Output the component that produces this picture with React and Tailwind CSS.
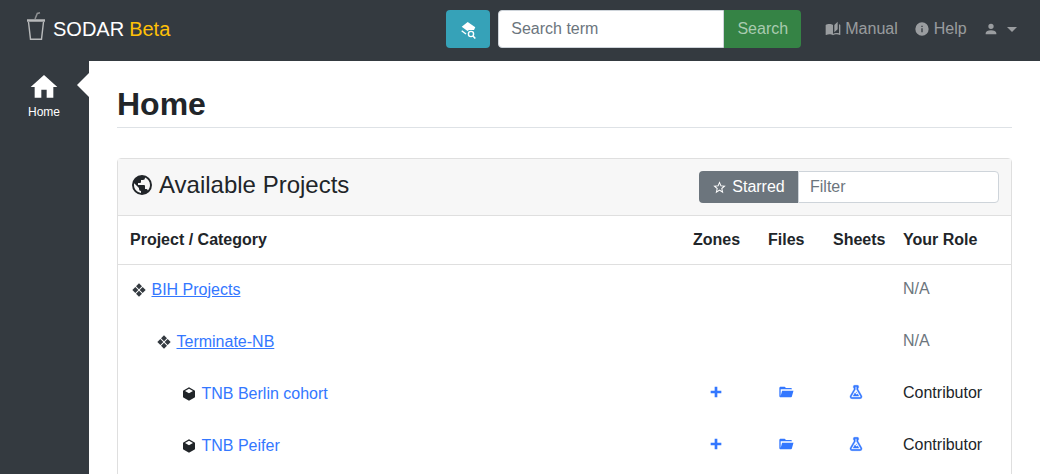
import React from "react";

const mdi = {
  home: "M10 20v-6h4v6h5v-8h3L12 3 2 12h3v8z",
  earth:
    "M17.9,17.39C17.64,16.59 16.89,16 16,16H15V13A1,1 0 0,0 14,12H8V10H10A1,1 0 0,0 11,9V7H13A2,2 0 0,0 15,5V4.59C17.93,5.77 20,8.64 20,12C20,14.08 19.2,15.97 17.9,17.39M11,19.93C7.05,19.44 4,16.08 4,12C4,11.38 4.08,10.78 4.21,10.21L9,15V16A2,2 0 0,0 11,18M12,2A10,10 0 0,0 2,12A10,10 0 0,0 12,22A10,10 0 0,0 22,12A10,10 0 0,0 12,2Z",
  info: "M13,9H11V7H13M13,17H11V11H13M12,2A10,10 0 0,0 2,12A10,10 0 0,0 12,22A10,10 0 0,0 22,12A10,10 0 0,0 12,2Z",
  account:
    "M12,4A4,4 0 0,1 16,8A4,4 0 0,1 12,12A4,4 0 0,1 8,8A4,4 0 0,1 12,4M12,14C16.42,14 20,15.79 20,18V20H4V18C4,15.79 7.58,14 12,14Z",
  plus: "M20 14H14V20H10V14H4V10H10V4H14V10H20V14Z",
  folder:
    "M19,20H4C2.89,20 2,19.1 2,18V6C2,4.89 2.89,4 4,4H10L12,6H19A2,2 0 0,1 21,8H21L4,8V18L6.14,10H23.21L20.93,18.5C20.7,19.37 19.92,20 19,20Z",
  flask:
    "M5,19A1,1 0 0,0 6,20H18A1,1 0 0,0 19,19C19,18.79 18.93,18.59 18.82,18.43L13,8.35V4H11V8.35L5.18,18.43C5.07,18.59 5,18.79 5,19M6,22A3,3 0 0,1 3,19C3,18.4 3.18,17.84 3.5,17.37L9,7.81V6A1,1 0 0,1 8,5V4A2,2 0 0,1 10,2H14A2,2 0 0,1 16,4V5A1,1 0 0,1 15,6V7.81L20.5,17.37C20.82,17.84 21,18.4 21,19A3,3 0 0,1 18,22H6M13,16L14.34,14.66L16.27,18H7.73L10.39,13.39L13,16M12.5,12A0.5,0.5 0 0,1 13,12.5A0.5,0.5 0 0,1 12.5,13A0.5,0.5 0 0,1 12,12.5A0.5,0.5 0 0,1 12.5,12Z",
  star: "M12,15.39L8.24,17.66L9.23,13.38L5.91,10.5L10.29,10.13L12,6.09L13.71,10.13L18.09,10.5L14.77,13.38L15.76,17.66M22,9.24L14.81,8.63L12,2L9.19,8.62L2,9.24L7.45,13.97L5.82,21L12,17.27L18.18,21L16.54,13.97L22,9.24Z",
  cube: "M21,16.5C21,16.88 20.79,17.21 20.47,17.38L12.57,21.82C12.41,21.94 12.21,22 12,22C11.79,22 11.59,21.94 11.43,21.82L3.53,17.38C3.21,17.21 3,16.88 3,16.5V7.5C3,7.12 3.21,6.79 3.53,6.62L11.43,2.18C11.59,2.06 11.79,2 12,2C12.21,2 12.41,2.06 12.57,2.18L20.47,6.62C20.79,6.79 21,7.12 21,7.5V16.5M12,4.15L6.04,7.5L12,10.85L17.96,7.5L12,4.15Z",
  rhombus:
    "M12 2L7.5 6.5L12 11L16.5 6.5ZM6.5 7.5L2 12L6.5 16.5L11 12ZM17.5 7.5L13 12L17.5 16.5L22 12ZM12 13L7.5 17.5L12 22L16.5 17.5Z",
  book: "M19 1L14 6V17L19 12.5V1M21 5V18.5C19.9 18.15 18.7 18 17.5 18C15.8 18 13.35 18.65 12 19.5V6C10.55 4.9 8.45 4.5 6.5 4.5C4.55 4.5 2.45 4.9 1 6V20.65C1 20.9 1.25 21.15 1.5 21.15C1.6 21.15 1.65 21.1 1.75 21.1C3.1 20.45 5.05 20 6.5 20C8.45 20 10.55 20.4 12 21.5C13.35 20.65 15.8 20 17.5 20C19.15 20 20.85 20.3 22.25 21.05C22.35 21.1 22.4 21.1 22.5 21.1C22.75 21.1 23 20.85 23 20.6V6C22.4 5.55 21.75 5.25 21 5Z",
};

function Icon({ d, className }) {
  return (
    <svg viewBox="0 0 24 24" fill="currentColor" className={className}>
      <path d={d} />
    </svg>
  );
}

const projects = [
  { name: "BIH Projects", indent: "pl-[13px]", category: true },
  { name: "Terminate-NB", indent: "pl-[38px]", category: true },
  { name: "TNB Berlin cohort", indent: "pl-[63px]" },
  { name: "TNB Peifer", indent: "pl-[63px]" },
];

function ProjectRow({ name, indent, category }) {
  return (
    <div className="flex h-[52px] items-center pb-[2px]">
      <div className={`flex flex-1 items-center ${indent}`}>
        <Icon
          d={category ? mdi.rhombus : mdi.cube}
          className={`h-4 w-4 shrink-0 ${category ? "text-[#343a40]" : "text-[#212529]"}`}
        />
        <a
          href="#"
          className={`ml-[4.5px] text-[#3377ff] ${category ? "underline" : ""}`}
        >
          {name}
        </a>
      </div>
      {category ? (
        <div className="w-[108px] pb-[2px] text-[#6c757d]">N/A</div>
      ) : (
        <>
          <div className="flex w-[225px] items-center pb-[4px] text-[#3377ff]">
            <Icon d={mdi.plus} className="ml-[30px] h-4 w-4" />
            <Icon d={mdi.folder} className="ml-[54px] h-4 w-4" />
            <Icon d={mdi.flask} className="ml-[54px] h-4 w-4 stroke-current stroke-[0.6]" />
          </div>
          <div className="w-[108px] pb-[2px] text-[#212529]">Contributor</div>
        </>
      )}
    </div>
  );
}

export default function App() {
  return (
    <div className="flex h-[474px] w-[1040px] flex-col overflow-hidden bg-[#343a40] font-['Liberation_Sans',Arial,sans-serif] text-base text-[#212529]">
      {/* Navbar */}
      <header className="flex h-[61px] shrink-0 items-center pb-[3px] pl-[26px]">
        <svg viewBox="0 0 20 28" fill="none" className="mb-[6px] h-[28px] w-[20px]">
          <path d="M9 7L11.3 1.5L14 .8" stroke="#8f9193" strokeWidth="1.5" />
          <path d="M1 8.5H19" stroke="#b8babb" strokeWidth="2.5" />
          <path d="M2.5 10L4.5 27.2H15.5L17.5 10" stroke="#b8babb" strokeWidth="1.4" />
        </svg>
        <span className="ml-[7px] text-[20px] text-white">SODAR</span>
        <span className="ml-[5px] text-[20px] text-[#ffc107]">Beta</span>
        <button className="ml-[276px] flex h-[38px] w-[44px] items-center justify-center rounded bg-[#36a2b8] text-white">
          <svg viewBox="0 0 16 17" className="mt-[2px] h-[17px] w-4" fill="none" stroke="currentColor">
            <path d="M7.7 0L1.7 4.7L7.5 9L9 8H14L15.3 5.3Z" fill="currentColor" stroke="none" />
            <path d="M1.7 8.7L6 12" strokeWidth="1.4" />
            <circle cx="11" cy="12" r="2.6" strokeWidth="1.4" />
            <path d="M13 14L15.3 16.5" strokeWidth="1.6" />
          </svg>
        </button>
        <div className="ml-[8px] flex h-[38px]">
          <div className="flex w-[226px] items-center rounded-l border border-[#ced4da] bg-white px-3 text-[#6c757d]">
            Search term
          </div>
          <button className="w-[77px] rounded-r bg-[#358345] text-[#a9cbb0]">Search</button>
        </div>
        <div className="ml-[24px] flex items-center text-[rgba(255,255,255,0.5)]">
          <Icon d={mdi.book} className="h-4 w-4" />
          <span className="ml-[4px]">Manual</span>
          <Icon d={mdi.info} className="ml-[16px] h-4 w-4" />
          <span className="ml-[4px]">Help</span>
          <Icon d={mdi.account} className="ml-[16px] h-4 w-4" />
          <span className="ml-[8px] h-0 w-0 border-x-[5px] border-t-[5px] border-x-transparent border-t-[rgba(255,255,255,0.5)]" />
        </div>
      </header>

      <div className="flex min-h-0 flex-1">
        {/* Sidebar */}
        <nav className="relative flex w-[89px] shrink-0 flex-col items-center pr-[1px] pt-[10px] text-white">
          <Icon d={mdi.home} className="h-8 w-8" />
          <span className="mt-[1px] text-xs">Home</span>
          <span className="absolute right-0 top-[12px] h-0 w-0 border-y-[12px] border-r-[12px] border-y-transparent border-r-white" />
        </nav>

        {/* Content */}
        <main className="min-w-0 flex-1 bg-white pl-[28px] pr-[28px] pt-[24px]">
          <div className="border-b border-[#dee2e6] pb-[4px]">
            <h1 className="text-[32px] font-bold leading-[38px] text-[#212529]">Home</h1>
          </div>

          <section className="mt-[30px] min-h-[400px] rounded border border-[#dfdfdf]">
            <div className="flex h-[57px] items-center border-b border-[#dfdfdf] bg-[#f7f7f7] pl-[12px] pr-[12px]">
              <div className="flex flex-1 items-center pb-[4px]">
                <Icon d={mdi.earth} className="h-6 w-6" />
                <h2 className="ml-[5px] text-2xl leading-none">Available Projects</h2>
              </div>
              <div className="flex h-[32px] w-[300px]">
                <div className="flex w-[99px] items-center justify-center rounded-l bg-[#6c757d] text-white">
                  <Icon d={mdi.star} className="mr-[5px] h-[15px] w-[15px]" />
                  Starred
                </div>
                <div className="flex flex-1 items-center rounded-r border border-[#ced4da] bg-white px-[11px] text-[#6c757d]">
                  Filter
                </div>
              </div>
            </div>

            <div className="flex h-[49px] items-center border-b border-[#dfdfdf] font-bold">
              <div className="flex-1 pl-[12px]">Project / Category</div>
              <div className="w-[75px] text-left">Zones</div>
              <div className="w-[65px] text-left">Files</div>
              <div className="w-[70px]">Sheets</div>
              <div className="w-[108px]">Your Role</div>
            </div>

            {projects.map((project) => (
              <ProjectRow key={project.name} {...project} />
            ))}
          </section>
        </main>
      </div>
    </div>
  );
}
